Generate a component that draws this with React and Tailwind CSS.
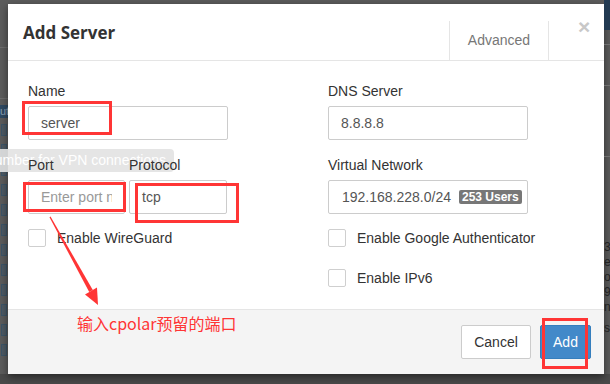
import React from "react";

function Check({ label }) {
  return (
    <label className="flex items-center h-[18px]">
      <span className="w-[18px] h-[18px] border border-[#cfcfcf] rounded-[2px] bg-white" />
      <span className="ml-[11px] text-[14px] text-[#333]">{label}</span>
    </label>
  );
}

function Field({ label, children, className = "" }) {
  return (
    <div className={className}>
      <div className="relative z-10 text-[14px] leading-[20px] text-[#333] mb-[5px]">{label}</div>
      {children}
    </div>
  );
}

const input =
  "h-[34px] border border-[#ccc] rounded-[2px] bg-white px-[12px] text-[14px] text-[#555] flex items-center overflow-hidden whitespace-nowrap";

function Annotations() {
  return (
    <>
      <div className="absolute left-[22px] top-[101px] w-[90px] h-[34px] border-[3px] border-[#ff3535]" />
      <div className="absolute left-[23px] top-[182px] w-[103px] h-[30px] border-[3px] border-[#ff3535]" />
      <div className="absolute left-[135px] top-[183px] w-[104px] h-[40px] border-[3px] border-[#ff3535]" />
      <div className="absolute left-[542px] top-[318px] w-[46px] h-[51px] border-[3px] border-[#ff3535]" />
      <svg className="absolute left-0 top-0" width="610" height="384">
        <polygon points="50.5,216.5 49.5,217.3 89.2,292 92.8,290" fill="#ff3535" />
        <polygon points="97,287.5 85,294.5 98,305" fill="#ff3535" />
      </svg>
      <div className="absolute left-[77px] top-[313px] text-[16px] leading-[20px] text-[#ff3535] font-['Noto_Sans_CJK_SC',sans-serif]">
        输入cpolar预留的端口
      </div>
    </>
  );
}

export default function App() {
  return (
    <div className="relative w-[610px] h-[384px] overflow-hidden bg-[#4a4a4a] font-['Liberation_Sans',Arial,sans-serif]">
      <div className="flex h-[374px] bg-[#5c5c5c]">
        {/* dimmed page, left edge */}
        <div className="w-[8px] flex flex-col">
          <div className="h-[47px]" />
          <div className="h-px bg-[#6e6e6e]" />
          <div className="h-[50px]" />
          <div className="h-px bg-[#6e6e6e]" />
          <div className="h-[6px]" />
          <div className="h-[13px] bg-[#2f4a63] text-[11px] leading-[13px] text-[#8aa0b5] overflow-hidden">ut</div>
          <div className="flex flex-col gap-[8px] pt-[6px] pl-[1px]">
            {Array.from({ length: 12 }).map((_, i) => (
              <div key={i} className="w-[6px] h-[12px] border border-[#3d5568] bg-[#4e5a63]" />
            ))}
          </div>
        </div>

        <div className="mt-[4px] w-[596px] h-[370px] bg-white flex flex-col shadow-[0_3px_8px_rgba(0,0,0,0.5)]">
          <div className="h-[57px] border-b border-[#e5e5e5] flex items-end">
            <div className="flex-1 self-center pl-[15px] pt-[1px] text-[17px] font-bold text-[#333] font-['Open_Sans',sans-serif]">
              Add Server
            </div>
            <div className="w-[100px] h-[39px] border-x border-[#e5e5e5] flex items-center justify-center text-[14px] text-[#777]">
              Advanced
            </div>
            <div className="w-[55px] self-start pt-[12px] pl-[29px] text-[21px] leading-[21px] font-bold text-[#c8c8c8]">
              ×
            </div>
          </div>

          <div className="flex-1 grid grid-cols-[300px_1fr] pt-[20px] pl-[20px]">
            <div className="flex flex-col">
              <Field label="Name">
                <div className={`${input} w-[200px]`}>server</div>
              </Field>
              <div className="flex gap-[4px] mt-[15px]">
                <Field label="Port">
                  <div className={`${input} w-[97px] text-[#999]`}>
                    <span className="block w-full overflow-hidden">Enter port number</span>
                  </div>
                </Field>
                <Field label="Protocol">
                  <div className={`${input} w-[98px]`}>tcp</div>
                </Field>
              </div>
              <div className="mt-[15px]">
                <Check label="Enable WireGuard" />
              </div>
            </div>
            <div className="flex flex-col">
              <Field label="DNS Server">
                <div className={`${input} w-[200px]`}>8.8.8.8</div>
              </Field>
              <Field label="Virtual Network" className="mt-[15px]">
                <div className={`${input} w-[200px] pl-[13px]`}>
                  192.168.228.0/24
                  <span className="ml-[8px] px-[3px] bg-[#777] rounded-[2px] text-white text-[12px] leading-[14px] font-bold">
                    253 Users
                  </span>
                </div>
              </Field>
              <div className="mt-[15px]">
                <Check label="Enable Google Authenticator" />
              </div>
              <div className="mt-[22px]">
                <Check label="Enable IPv6" />
              </div>
            </div>
          </div>

          <div className="h-[65px] border-t border-[#e5e5e5] bg-[#f4f4f4] flex items-center justify-end gap-[9px] pr-[13px]">
            <button className="w-[70px] h-[34px] border border-[#ccc] rounded-[2px] bg-white text-[14px] text-[#333]">
              Cancel
            </button>
            <button className="w-[51px] h-[34px] border border-[#357ebd] rounded-[2px] bg-[#4289c9] text-[14px] text-white">
              Add
            </button>
          </div>
        </div>

        {/* dimmed page, right edge */}
        <div className="flex-1 flex flex-col text-[12px] leading-[15px] text-[#222] overflow-hidden">
          <div className="h-[30px] bg-[#223a52]" />
          <div className="h-px mt-[14px] bg-[#707070]" />
          <div className="h-px mt-[40px] bg-[#707070]" />
          <div className="h-px mt-[70px] bg-[#707070]" />
          <div className="mt-[83px] flex flex-col">
            <span>3</span>
            <span>e</span>
            <span>o</span>
            <span>9</span>
            <span>n</span>
            <span className="mt-[6px]">s</span>
          </div>
        </div>
      </div>

      <div className="absolute right-[436px] top-[149px] h-[23px] px-[8px] bg-[#e2e2e2]/90 rounded-[4px] text-[14px] leading-[23px] text-white whitespace-nowrap">
        port number for VPN connections
      </div>
      <Annotations />
    </div>
  );
}
